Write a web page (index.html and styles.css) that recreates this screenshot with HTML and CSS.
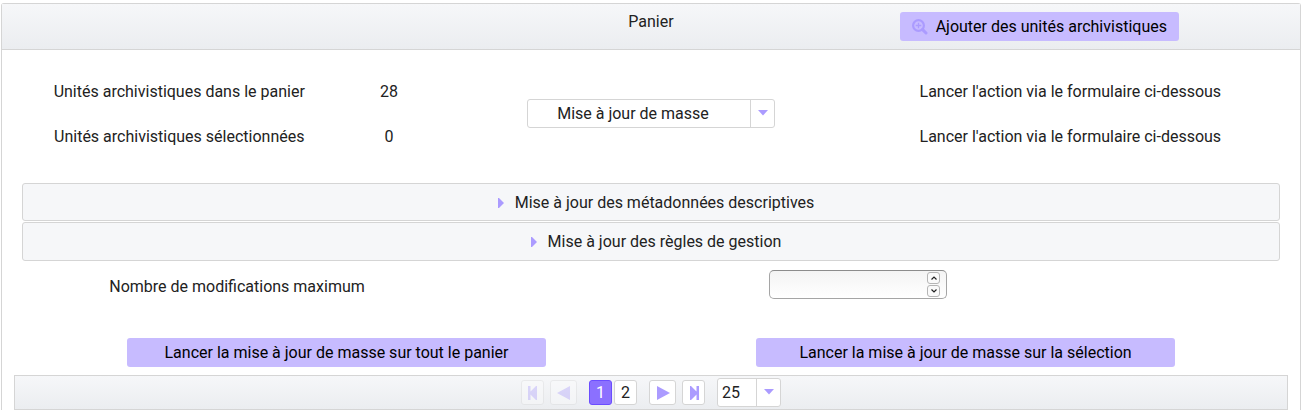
FILE: index.html
```html
<!DOCTYPE html>
<html lang="fr">
<head>
<meta charset="utf-8">
<title>Panier</title>
<link rel="stylesheet" href="styles.css">
</head>
<body>
<main class="panel">
  <header class="panel-header">
    <h1 class="panel-title">Panier</h1>
    <button type="button" class="btn btn-add">
      <svg class="btn-icon" viewBox="0 0 16 16" width="16" height="16" aria-hidden="true">
        <circle cx="6.5" cy="6.5" r="5.4" fill="none" stroke="currentColor" stroke-width="2.2"/>
        <path d="M10.6 10.6L14 14" stroke="currentColor" stroke-width="3" stroke-linecap="round"/>
        <path d="M6.5 3.7v5.6M3.7 6.5h5.6" stroke="currentColor" stroke-width="1.3"/>
      </svg>
      <span>Ajouter des unités archivistiques</span>
    </button>
  </header>

  <section class="content">
    <div class="summary">
      <div class="stack"><span>Unités archivistiques dans le panier</span><span>Unités archivistiques sélectionnées</span></div>
      <div class="stack"><span>28</span><span>0</span></div>
      <div class="dropdown dropdown-action">
        <select class="dropdown-select" aria-label="Action">
          <option>Mise à jour de masse</option>
        </select>
        <svg class="dropdown-arrow" viewBox="0 0 10 6" width="10" height="6" aria-hidden="true"><path d="M0 0h10L5 5.5z" fill="currentColor"/></svg>
      </div>
      <div class="stack"><span>Lancer l'action via le formulaire ci-dessous</span><span>Lancer l'action via le formulaire ci-dessous</span></div>
    </div>

    <div class="accordion">
      <button type="button" class="accordion-header" aria-expanded="false">
        <svg class="caret" viewBox="0 0 6 10" width="6" height="10" aria-hidden="true"><path d="M0 0h1l5 5-5 5H0z" fill="currentColor"/></svg>
        <span>Mise à jour des métadonnées descriptives</span>
      </button>
      <button type="button" class="accordion-header" aria-expanded="false">
        <svg class="caret" viewBox="0 0 6 10" width="6" height="10" aria-hidden="true"><path d="M0 0h1l5 5-5 5H0z" fill="currentColor"/></svg>
        <span>Mise à jour des règles de gestion</span>
      </button>
    </div>

    <div class="field">
      <label for="max-updates">Nombre de modifications maximum</label>
      <div class="spinner">
        <input id="max-updates" class="spinner-input" type="number">
        <div class="spinner-buttons">
          <button type="button" class="spinner-button" aria-label="Augmenter"><svg viewBox="0 0 8 6" width="8" height="6" aria-hidden="true"><path d="M1.500 4.500L4 2l2.500 2.500" fill="none" stroke="currentColor" stroke-width="1.2"/></svg></button>
          <button type="button" class="spinner-button" aria-label="Diminuer"><svg viewBox="0 0 8 6" width="8" height="6" aria-hidden="true"><path d="M1.500 1.500L4 4l2.500-2.500" fill="none" stroke="currentColor" stroke-width="1.2"/></svg></button>
        </div>
      </div>
    </div>

    <div class="actions">
      <button type="button" class="btn">Lancer la mise à jour de masse sur tout le panier</button>
      <button type="button" class="btn">Lancer la mise à jour de masse sur la sélection</button>
    </div>
  </section>

  <nav class="paginator" aria-label="Pagination">
    <div class="page-group page-group-nav">
      <button type="button" class="page-btn" disabled aria-label="Première page"><svg viewBox="0 0 12 14" width="12" height="14" aria-hidden="true"><path d="M1 0h2.500v5.500L9 0h1v14H9L3.500 8.500V14H1z" fill="currentColor"/></svg></button>
      <button type="button" class="page-btn page-btn-wide" disabled aria-label="Page précédente"><svg viewBox="0 0 14 14" width="14" height="14" aria-hidden="true"><path d="M13 0v14L0 7z" fill="currentColor"/></svg></button>
    </div>
    <div class="page-group">
      <button type="button" class="page-btn page-current" aria-current="page">1</button>
      <button type="button" class="page-btn page-number">2</button>
    </div>
    <div class="page-group page-group-nav">
      <button type="button" class="page-btn page-btn-wide" aria-label="Page suivante"><svg viewBox="0 0 14 14" width="14" height="14" aria-hidden="true"><path d="M1 0v14L14 7z" fill="currentColor"/></svg></button>
      <button type="button" class="page-btn" aria-label="Dernière page"><svg viewBox="0 0 12 14" width="12" height="14" aria-hidden="true"><path d="M11 0H8.500v5.500L3 0H2v14h1l5.500-5.500V14H11z" fill="currentColor"/></svg></button>
    </div>
    <div class="dropdown dropdown-rows">
      <select class="dropdown-select" aria-label="Lignes par page">
        <option>25</option>
      </select>
      <svg class="dropdown-arrow" viewBox="0 0 10 6" width="10" height="6" aria-hidden="true"><path d="M0 0h10L5 5.500z" fill="currentColor"/></svg>
    </div>
  </nav>
</main>
</body>
</html>
```

FILE: styles.css
```css
* {
  box-sizing: border-box;
}

body {
  margin: 0;
  padding: 3px 0 0 1px;
  background: #fff;
  color: #222;
  font: 16px/20px Roboto, sans-serif;
}

button,
input,
select {
  font: inherit;
  color: inherit;
}

.panel {
  border: 1px solid #d5d5d5;
  border-bottom: 0;
  border-radius: 3px 3px 0 0;
}

.panel-header {
  display: grid;
  grid-template-columns: repeat(3, 1fr);
  align-items: start;
  padding: 8px 20px;
  border-bottom: 1px solid #d5d5d5;
  background: linear-gradient(#f6f7f9, #ebedf0);
}

.panel-title {
  grid-column: 2;
  margin: 0;
  font-size: 16px;
  font-weight: 400;
  text-align: center;
}

.btn {
  display: flex;
  align-items: center;
  justify-content: center;
  gap: 8px;
  width: 66.667%;
  padding: 5px 12px 4px;
  border: 0;
  border-radius: 3px;
  background: #c7bbff;
  color: #000;
}

.btn-add {
  justify-content: flex-start;
  margin-left: 39px;
}

.btn-icon {
  color: #ab9bff;
}

.content {
  padding: 32px 20px 0;
}

.summary {
  display: grid;
  grid-template-columns: 3fr 1fr 4fr 4fr;
  justify-items: center;
}

.stack {
  display: grid;
  gap: 25px;
  text-align: center;
}

.dropdown {
  position: relative;
  height: 29px;
  border: 1px solid #d5d5d5;
  border-radius: 3px;
  background: #fff;
}

.dropdown-action {
  width: 248px;
  margin-top: 17px;
}

.dropdown-select {
  width: 100%;
  height: 100%;
  border: 0;
  background: transparent;
  appearance: none;
  text-align: center;
  padding: 0 36px 0 0;
}

.dropdown::after {
  content: "";
  position: absolute;
  top: 0;
  bottom: 0;
  right: 23px;
  border-left: 1px solid #d5d5d5;
}

.dropdown-arrow {
  position: absolute;
  top: 10px;
  right: 6px;
  color: #ab9bff;
  pointer-events: none;
}

.accordion {
  display: grid;
  gap: 1px;
  margin-top: 36px;
}

.accordion-header {
  display: flex;
  align-items: center;
  justify-content: center;
  gap: 11px;
  padding: 9px 8px 7px 18px;
  border: 1px solid #d5d5d5;
  border-radius: 3px;
  background: #f6f7f9;
}

.accordion-header:last-child {
  padding-bottom: 8px;
}

.caret {
  color: #ab9bff;
}

.field {
  display: grid;
  grid-template-columns: 1fr 2fr;
  align-items: center;
  justify-items: center;
  margin-top: 9px;
  padding: 0 8px;
}

.field label {
  padding-top: 4px;
}

.spinner {
  position: relative;
  width: 178px;
}

.spinner-input {
  display: block;
  width: 100%;
  height: 29px;
  padding: 4px 24px 4px 6px;
  border: 1px solid #a5a5a5;
  border-top-color: #8c8c8c;
  border-radius: 5px;
  background: linear-gradient(#f4f4f4, #fff);
  appearance: textfield;
}

.spinner-input::-webkit-inner-spin-button {
  display: none;
}

.spinner-buttons {
  position: absolute;
  top: 2px;
  right: 7px;
  display: grid;
  gap: 1px;
}

.spinner-button {
  display: grid;
  place-items: center;
  width: 13px;
  height: 12px;
  padding: 0;
  border: 1px solid #b5b5b5;
  border-radius: 3px;
  background: #fafafa;
}

.actions {
  display: grid;
  grid-template-columns: 1fr 1fr;
  justify-items: center;
  margin-top: 39px;
}

.paginator {
  display: flex;
  align-items: center;
  justify-content: center;
  gap: 12px;
  margin: 8px 12px 0;
  padding: 2px 0;
  border: 1px solid #d5d5d5;
  background: linear-gradient(#f6f7f9, #ebedf0);
}

.page-group {
  display: flex;
  gap: 2px;
}

.page-group-nav {
  gap: 6px;
}

.page-btn {
  display: grid;
  place-items: center;
  width: 23px;
  height: 25px;
  padding: 0;
  border: 1px solid #d5d5d5;
  border-radius: 3px;
  background: #fff;
  color: #ab9bff;
}

.page-btn-wide {
  width: 27px;
}

.page-btn:disabled {
  opacity: 0.35;
}

.page-number {
  color: #222;
}

.page-current {
  border-color: #6b4dff;
  background: #8b70ff;
  color: #fff;
}

.dropdown-rows {
  width: 64px;
}

.dropdown-rows .dropdown-select {
  padding: 0 24px 0 4px;
  text-align: left;
}
```
